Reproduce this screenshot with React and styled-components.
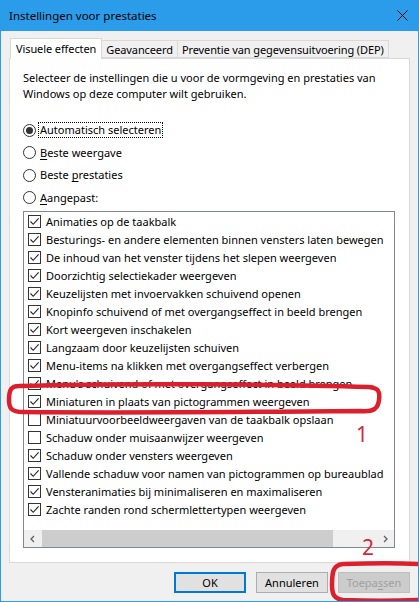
import * as React from "react"
import styled, { createGlobalStyle } from "styled-components"

const GlobalStyle = createGlobalStyle`
  html, body {
    margin: 0;
    padding: 0;
    background: #ffffff;
  }
  body {
    font-family: "Noto Sans", "Open Sans", sans-serif;
    font-size: 11px;
    color: #000;
  }
`

const items = [
  { label: "Animaties op de taakbalk", on: true },
  { label: "Besturings- en andere elementen binnen vensters laten bewegen", on: true },
  { label: "De inhoud van het venster tijdens het slepen weergeven", on: true },
  { label: "Doorzichtig selectiekader weergeven", on: true },
  { label: "Keuzelijsten met invoervakken schuivend openen", on: true },
  { label: "Knopinfo schuivend of met overgangseffect in beeld brengen", on: true },
  { label: "Kort weergeven inschakelen", on: true },
  { label: "Langzaam door keuzelijsten schuiven", on: true },
  { label: "Menu-items na klikken met overgangseffect verbergen", on: true },
  { label: "Menu's schuivend of met overgangseffect in beeld brengen", on: true },
  { label: "Miniaturen in plaats van pictogrammen weergeven", on: true },
  { label: "Miniatuurvoorbeeldweergaven van de taakbalk opslaan", on: false },
  { label: "Schaduw onder muisaanwijzer weergeven", on: false },
  { label: "Schaduw onder vensters weergeven", on: true },
  { label: "Vallende schaduw voor namen van pictogrammen op bureaublad", on: true },
  { label: "Vensteranimaties bij minimaliseren en maximaliseren", on: true },
  { label: "Zachte randen rond schermlettertypen weergeven", on: true },
]

const Window = styled.div`
  position: relative;
  width: 419px;
  height: 602px;
  box-sizing: border-box;
  border: 1px solid #2a9cea;
  border-top: none;
  background: #f0f0f0;
  display: flex;
  flex-direction: column;
  overflow: hidden;
`

const TitleBar = styled.div`
  height: 31px;
  flex: none;
  background: #2a9cea;
  display: flex;
  align-items: center;
  justify-content: space-between;
  padding: 0 10px 0 8px;
  font-size: 11.5px;
`

const Body = styled.div`
  flex: 1;
  display: flex;
  flex-direction: column;
  padding: 7px 8px 0 8px;
`

const TabStrip = styled.div`
  display: flex;
  align-items: flex-end;
  height: 20px;
  padding-left: 1px;
`

const Tab = styled.div`
  box-sizing: border-box;
  height: ${(p) => (p.$active ? "21px" : "18px")};
  margin-bottom: ${(p) => (p.$active ? "-1px" : "0")};
  margin-left: ${(p) => (p.$active ? "0" : "-1px")};
  padding: 0 ${(p) => (p.$active ? "5px" : "4px")};
  padding-bottom: ${(p) => (p.$active ? "2px" : "0")};
  background: ${(p) => (p.$active ? "#ffffff" : "#f0f0f0")};
  border: 1px solid #d9d9d9;
  border-bottom: ${(p) => (p.$active ? "none" : "1px solid #d9d9d9")};
  display: flex;
  align-items: center;
  position: relative;
  z-index: ${(p) => (p.$active ? 1 : 0)};
  letter-spacing: -0.1px;
  white-space: nowrap;
`

const Panel = styled.div`
  box-sizing: border-box;
  height: 505px;
  background: #ffffff;
  border: 1px solid #d9d9d9;
  padding: 11px 13px 0 13px;
  display: flex;
  flex-direction: column;
`

const Description = styled.p`
  margin: 0;
  line-height: 16px;
`

const RadioGroup = styled.div`
  margin-top: 19px;
  display: flex;
  flex-direction: column;
  gap: 4px;
`

const RadioRow = styled.div`
  height: 18.5px;
  display: flex;
  align-items: center;
  gap: 2px;
`

const RadioCircle = styled.span`
  box-sizing: border-box;
  width: 13px;
  height: 13px;
  border-radius: 50%;
  border: 1px solid #333333;
  background: #fff;
  display: flex;
  align-items: center;
  justify-content: center;
  &::after {
    content: "";
    width: 7px;
    height: 7px;
    border-radius: 50%;
    background: ${(p) => (p.$on ? "#333333" : "transparent")};
  }
`

const RadioLabel = styled.span`
  padding: 0 1px;
  border: 1px dotted ${(p) => (p.$focus ? "#000" : "transparent")};
  line-height: 14px;
`

const Key = styled.span`
  text-decoration: underline;
  text-underline-offset: 2px;
`

const ListBox = styled.div`
  box-sizing: border-box;
  margin-top: 4px;
  width: 372px;
  height: 337px;
  border: 1px solid #828790;
  display: flex;
  flex-direction: column;
  overflow: hidden;
`

const ListContent = styled.div`
  flex: 1;
  overflow: hidden;
`

const ItemRow = styled.div`
  height: 18px;
  display: flex;
  align-items: center;
  gap: 5px;
  padding-left: 4px;
  white-space: nowrap;
`

const CheckBox = styled.span`
  box-sizing: border-box;
  flex: none;
  width: 13px;
  height: 13px;
  border: 1px solid #333333;
  background: #fff;
  display: flex;
  align-items: center;
  justify-content: center;
`

const ScrollBar = styled.div`
  height: 17px;
  flex: none;
  background: #f0f0f0;
  display: flex;
  align-items: stretch;
`

const ScrollArrow = styled.div`
  width: 17px;
  display: flex;
  align-items: center;
  justify-content: center;
`

const ScrollTrack = styled.div`
  flex: 1;
  display: flex;
  align-items: stretch;
  padding: 0 1px;
`

const ScrollThumb = styled.div`
  width: 291px;
  background: #cdcdcd;
`

const Footer = styled.div`
  display: flex;
  justify-content: flex-end;
  gap: 10px;
  padding: 9px 0 0 0;
`

const Button = styled.div`
  box-sizing: border-box;
  width: 72px;
  height: 21px;
  display: flex;
  align-items: center;
  justify-content: center;
  background: ${(p) => (p.$disabled ? "#cccccc" : "#e1e1e1")};
  border: ${(p) => (p.$default ? "2px solid #0078d7" : p.$disabled ? "1px solid #bfbfbf" : "1px solid #adadad")};
  color: ${(p) => (p.$disabled ? "#a0a0a0" : "#000")};
`

const Overlay = styled.svg`
  position: absolute;
  left: 0;
  top: 0;
  pointer-events: none;
`

const Mark = styled.span`
  position: absolute;
  left: ${(p) => p.$x}px;
  top: ${(p) => p.$y}px;
  color: #d4283a;
  font-family: "Noto Sans", sans-serif;
  font-size: 21px;
  line-height: 1;
`

function Check() {
  return (
    <svg width="11" height="11" viewBox="0 0 11 11">
      <path d="M1.5 5.5 L4.2 8.3 L9.6 2.4" fill="none" stroke="#222" strokeWidth="1.1" />
    </svg>
  )
}

function Chevron({ dir }) {
  const d = dir === "left" ? "M5 1 L2 4 L5 7" : "M2 1 L5 4 L2 7"
  return (
    <svg width="7" height="8" viewBox="0 0 7 8">
      <path d={d} fill="none" stroke="#606060" strokeWidth="1.3" />
    </svg>
  )
}

export default function App() {
  return (
    <>
      <GlobalStyle />
      <Window>
        <TitleBar>
          <span>Instellingen voor prestaties</span>
          <svg width="11" height="11" viewBox="0 0 11 11">
            <path d="M0.5 0.5 L10.5 10.5 M10.5 0.5 L0.5 10.5" stroke="#000" strokeWidth="1" />
          </svg>
        </TitleBar>
        <Body>
          <TabStrip>
            <Tab $active>Visuele effecten</Tab>
            <Tab>Geavanceerd</Tab>
            <Tab>Preventie van gegevensuitvoering (DEP)</Tab>
          </TabStrip>
          <Panel>
            <Description>
              Selecteer de instellingen die u voor de vormgeving en prestaties van
              <br />
              Windows op deze computer wilt gebruiken.
            </Description>
            <RadioGroup>
              <RadioRow>
                <RadioCircle $on />
                <RadioLabel $focus>Automatisch selecteren</RadioLabel>
              </RadioRow>
              <RadioRow>
                <RadioCircle />
                <RadioLabel>
                  <Key>B</Key>este weergave
                </RadioLabel>
              </RadioRow>
              <RadioRow>
                <RadioCircle />
                <RadioLabel>
                  Beste <Key>p</Key>restaties
                </RadioLabel>
              </RadioRow>
              <RadioRow>
                <RadioCircle />
                <RadioLabel>
                  <Key>A</Key>angepast:
                </RadioLabel>
              </RadioRow>
            </RadioGroup>
            <ListBox>
              <ListContent>
                {items.map((it) => (
                  <ItemRow key={it.label}>
                    <CheckBox>{it.on && <Check />}</CheckBox>
                    <span>{it.label}</span>
                  </ItemRow>
                ))}
              </ListContent>
              <ScrollBar>
                <ScrollArrow>
                  <Chevron dir="left" />
                </ScrollArrow>
                <ScrollTrack>
                  <ScrollThumb />
                </ScrollTrack>
                <ScrollArrow>
                  <Chevron dir="right" />
                </ScrollArrow>
              </ScrollBar>
            </ListBox>
          </Panel>
          <Footer>
            <Button $default>OK</Button>
            <Button>Annuleren</Button>
            <Button $disabled>
              Toepa<Key>s</Key>sen
            </Button>
          </Footer>
        </Body>

        <Overlay width="419" height="602" viewBox="0 0 419 602">
          <path
            d="M18 386 C120 383 280 384 368 387 C378 388 379 392 378 400 C377 409 372 412 360 411 C250 412 120 413 22 412 C10 412 8 408 8 400 C8 390 10 386 18 386 Z"
            fill="none"
            stroke="#dc1f2c"
            strokeWidth="4.5"
          />
          <path
            d="M342 564 C370 563 400 563 419 564 M419 600 C395 601 365 601 342 600 C333 599 331 594 331 585 C331 572 332 565 342 564"
            fill="none"
            stroke="#dc1f2c"
            strokeWidth="4.5"
          />
        </Overlay>
        <Mark $x={355} $y={424}>1</Mark>
        <Mark $x={361} $y={537}>2</Mark>
      </Window>
    </>
  )
}
